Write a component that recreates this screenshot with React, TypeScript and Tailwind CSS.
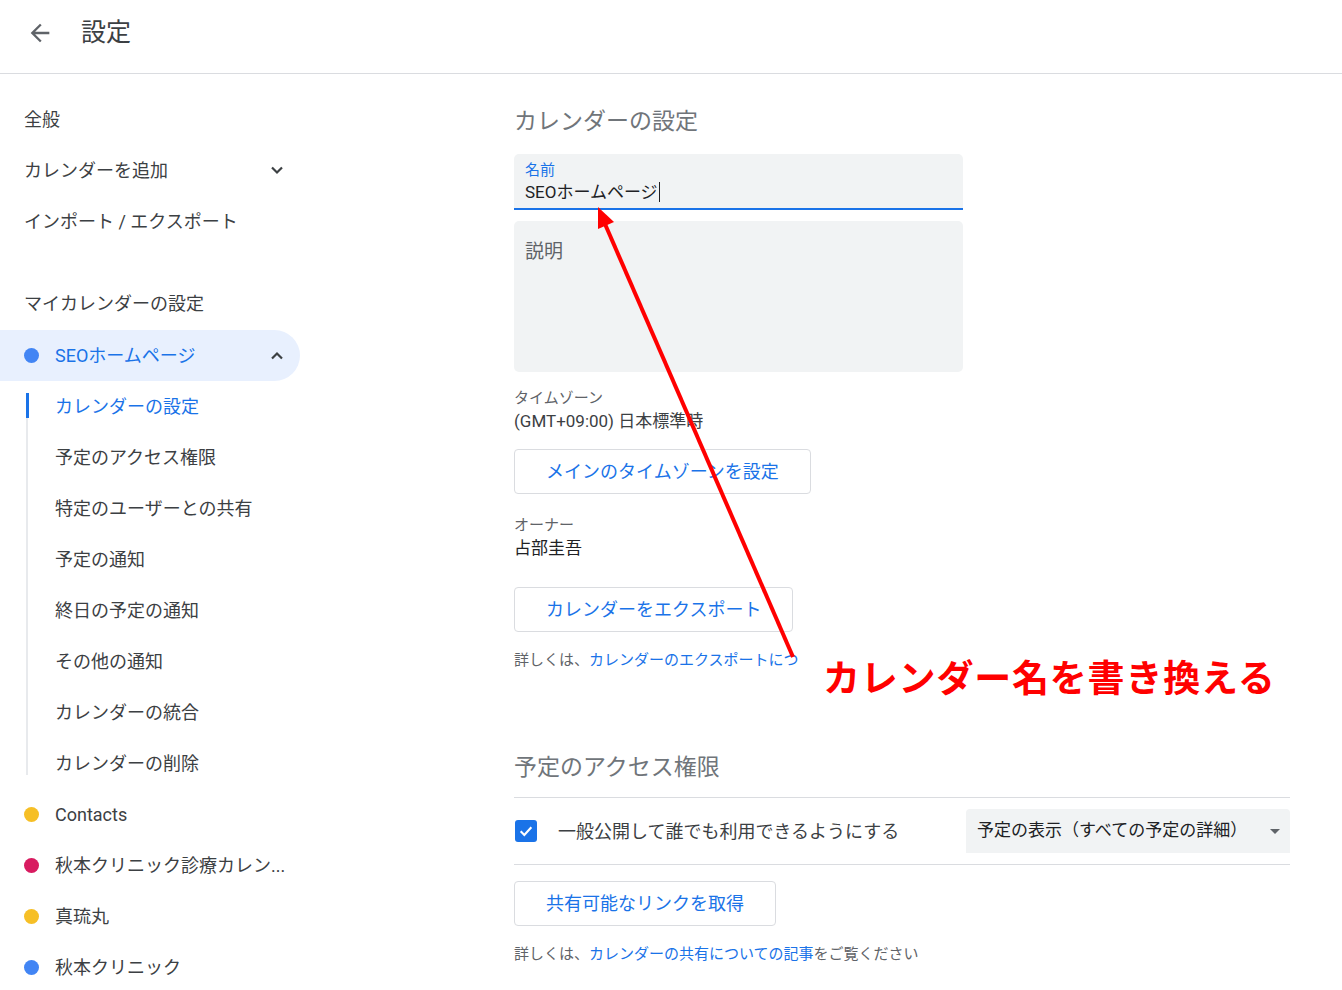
import React from 'react';

const font = { fontFamily: 'Roboto, "Noto Sans CJK JP", sans-serif' };

const Chevron = ({ up }: { up?: boolean }) => (
  <svg width="14" height="9" viewBox="0 0 14 9" className="text-[#3c4043]">
    <polyline
      points={up ? '2,7.5 7,2.5 12,7.5' : '2,1.5 7,6.5 12,1.5'}
      fill="none"
      stroke="currentColor"
      strokeWidth="2.2"
    />
  </svg>
);

const Dot = ({ color }: { color: string }) => (
  <span className="w-[15px] h-[15px] rounded-full shrink-0" style={{ backgroundColor: color }} />
);

const subItems = [
  'カレンダーの設定',
  '予定のアクセス権限',
  '特定のユーザーとの共有',
  '予定の通知',
  '終日の予定の通知',
  'その他の通知',
  'カレンダーの統合',
  'カレンダーの削除',
];

const otherCalendars = [
  { name: 'Contacts', color: '#f6bf26' },
  { name: '秋本クリニック診療カレン...', color: '#d81b60' },
  { name: '真琉丸', color: '#f6bf26' },
  { name: '秋本クリニック', color: '#4285f4' },
];

const Sidebar: React.FC = () => (
  <aside className="w-[300px] shrink-0 pt-[20px] text-[18px] text-[#3c4043]">
    <div className="h-[51px] flex items-center pl-[24px]">全般</div>
    <div className="h-[51px] flex items-center justify-between pl-[24px] pr-[16px]">
      <span>カレンダーを追加</span>
      <Chevron />
    </div>
    <div className="h-[51px] flex items-center pl-[24px]">インポート / エクスポート</div>
    <div className="h-[51px] flex items-center pl-[24px] mt-[31px] mb-[1px]">マイカレンダーの設定</div>
    <div className="h-[51px] flex items-center justify-between pl-[24px] pr-[16px] bg-[#e8f0fe] rounded-r-full text-[#1a73e8]">
      <span className="flex items-center gap-[16px]">
        <Dot color="#4285f4" />
        <span>SEOホームページ</span>
      </span>
      <Chevron up />
    </div>
    <div className="relative">
      <span className="absolute left-[26px] top-[12px] bottom-[14px] w-[2px] bg-[#e8eaed]" />
      <span className="absolute left-[26px] top-[12px] h-[25px] w-[3px] bg-[#1a73e8]" />
      {subItems.map((s, i) => (
        <div
          key={s}
          className={`h-[51px] flex items-center pl-[55px] ${i === 0 ? 'text-[#1a73e8]' : ''}`}
        >
          {s}
        </div>
      ))}
    </div>
    {otherCalendars.map((c) => (
      <div key={c.name} className="h-[51px] flex items-center pl-[24px] gap-[16px]">
        <Dot color={c.color} />
        <span>{c.name}</span>
      </div>
    ))}
  </aside>
);

const OutlineButton = ({ children }: { children: React.ReactNode }) => (
  <div className="inline-flex items-center h-[45px] px-[31px] border border-[#dadce0] rounded-[4px] text-[18px] text-[#1a73e8] bg-white">
    {children}
  </div>
);

const Main: React.FC = () => (
  <main className="pl-[214px] pt-[33px] text-[#3c4043]">
    <h2 className="text-[23px] leading-[30px] text-[#70757a]">カレンダーの設定</h2>

    <div className="mt-[17px] w-[449px] h-[56px] bg-[#f1f3f4] rounded-t-[5px] border-b-2 border-[#1a73e8] px-[11px] pt-[6px]">
      <div className="text-[15px] leading-[20px] text-[#1a73e8]">名前</div>
      <div className="text-[17px] leading-[24px] text-[#202124] flex items-center">
        SEOホームページ
        <span className="inline-block w-[1px] h-[20px] bg-[#202124] ml-[1px]" />
      </div>
    </div>

    <div className="mt-[11px] w-[449px] h-[151px] bg-[#f1f3f4] rounded-[5px] px-[11px] pt-[19px]">
      <div className="text-[19px] leading-[24px] text-[#5f6368]">説明</div>
    </div>

    <div className="mt-[16px] text-[15px] leading-[20px] text-[#5f6368]">タイムゾーン</div>
    <div className="mt-[2px] text-[17px] leading-[22px]">(GMT+09:00) 日本標準時</div>
    <div className="mt-[17px]">
      <OutlineButton>メインのタイムゾーンを設定</OutlineButton>
    </div>

    <div className="mt-[21px] text-[15px] leading-[20px] text-[#5f6368]">オーナー</div>
    <div className="mt-[2px] text-[17px] leading-[22px] text-[#202124]">占部圭吾</div>
    <div className="mt-[28px]">
      <OutlineButton>カレンダーをエクスポート</OutlineButton>
    </div>
    <div className="mt-[18px] text-[15px] leading-[20px] text-[#5f6368]">
      詳しくは、<span className="text-[#1a73e8]">カレンダーのエクスポートにつ</span>
    </div>

    <h2 className="mt-[83px] text-[23px] leading-[30px] text-[#70757a]">予定のアクセス権限</h2>
    <div className="mt-[14px] w-[776px] border-t border-[#dadce0]" />
    <div className="w-[776px] flex items-center justify-between py-[11px] border-b border-[#dadce0]">
      <div className="flex items-center gap-[21px] pl-[1px]">
        <span className="w-[22px] h-[22px] rounded-[3px] bg-[#1a73e8] flex items-center justify-center">
          <svg width="16" height="16" viewBox="0 0 24 24">
            <polyline points="4,12.5 9.5,18 20,6.5" fill="none" stroke="white" strokeWidth="3.2" />
          </svg>
        </span>
        <span className="text-[18px]">一般公開して誰でも利用できるようにする</span>
      </div>
      <div className="w-[324px] h-[44px] bg-[#f1f3f4] rounded-t-[4px] flex items-center justify-between pl-[11px] pr-[10px]">
        <span className="text-[17px] text-[#202124]">予定の表示（すべての予定の詳細）</span>
        <svg width="10" height="5" viewBox="0 0 10 5">
          <polygon points="0,0 10,0 5,5" fill="#5f6368" />
        </svg>
      </div>
    </div>
    <div className="mt-[16px]">
      <OutlineButton>共有可能なリンクを取得</OutlineButton>
    </div>
    <div className="mt-[18px] text-[15px] leading-[20px] text-[#5f6368]">
      詳しくは、<span className="text-[#1a73e8]">カレンダーの共有についての記事</span>をご覧ください
    </div>
  </main>
);

export default function App() {
  return (
    <div className="relative w-[1342px] h-[990px] overflow-hidden bg-white" style={font}>
      <header className="h-[74px] border-b border-[#dadce0] flex items-center pb-[8px]">
        <svg width="28" height="28" viewBox="0 0 24 24" className="ml-[26px] text-[#5f6368]">
          <path d="M20 11H7.83l5.59-5.59L12 4l-8 8 8 8 1.41-1.41L7.83 13H20v-2z" fill="currentColor" />
        </svg>
        <span className="ml-[27px] text-[25px] text-[#3c4043]">設定</span>
      </header>
      <div className="flex">
        <Sidebar />
        <Main />
      </div>

      {/* annotation overlay */}
      <svg className="absolute inset-0 pointer-events-none" width="1342" height="990">
        <line x1="793" y1="657" x2="605" y2="224" stroke="#ff0000" strokeWidth="4" />
        <polygon points="598,207 614,222 598,229" fill="#ff0000" />
      </svg>
      <div className="absolute left-[823px] top-[654px] bg-white text-[37px] leading-[52px] font-bold text-[#ff0000] tracking-[0.8px]">
        カレンダー名を書き換える
      </div>
    </div>
  );
}
